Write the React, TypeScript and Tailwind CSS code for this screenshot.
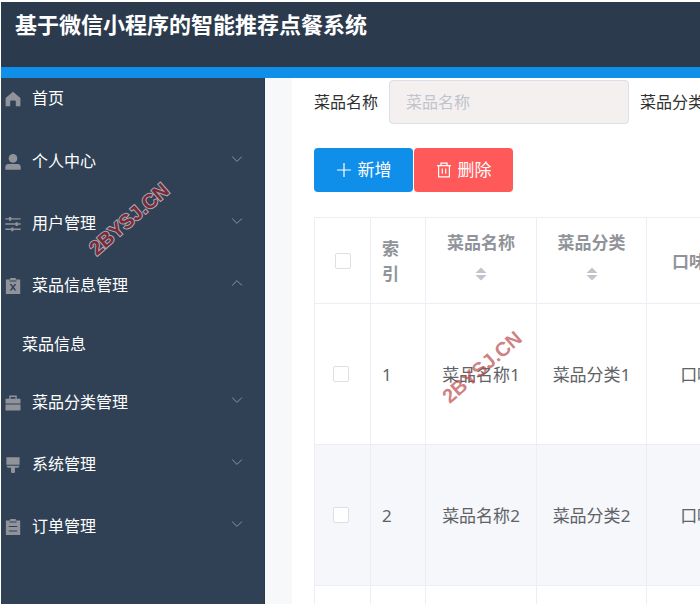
import type { ReactNode } from "react";

const icons: Record<string, ReactNode> = {
  home: <path d="M8 0.8 15.4 7v8.2h-4.6V10.4a1 1 0 0 0-1-1H6.2a1 1 0 0 0-1 1v4.8H0.6V7z" />,
  user: (
    <>
      <circle cx="8" cy="4.4" r="4.3" />
      <path d="M0.3 15.8v-2.4a3.4 3.4 0 0 1 3.4-3.4h8.6a3.4 3.4 0 0 1 3.4 3.4v2.4z" />
    </>
  ),
  operation: (
    <>
      <path d="M0.3 2.2h15.4v1.4H0.3zM0.3 7.3h15.4v1.4H0.3zM0.3 12.6h15.4v1.4H0.3z" />
      <path d="M4 1h2.2v3.8H4zM10.6 6.2h2.2V10h-2.2zM6.2 11.4h2.2v3.8H6.2z" />
    </>
  ),
  release: (
    <path
      fillRule="evenodd"
      d="M5.2 0h5.6v1.4h4.4V16H0.9V1.4h4.3zM4.6 2.4v1.2h6.8V2.4zM4.6 6 7.1 9.3 4.6 12.6h1.8L8 10.4 9.6 12.6h1.8L8.9 9.3 11.4 6H9.6L8 8.2 6.4 6z"
    />
  ),
  briefcase: (
    <path
      fillRule="evenodd"
      d="M4.2 0.6h7.6v3.2h3.7v4.8H0.5V3.8h3.7zM5.6 2v1.8h4.8V2zM0.5 9.6h15v5.8h-15z"
    />
  ),
  brush: <path d="M1.4 0.2h13.2v7.6H1.4zM1.4 8.8h13.2L13.4 10.8H10v4.6l-1.2 0.6H7.2L6 15.4v-4.6H2.6z" />,
  order: (
    <path
      fillRule="evenodd"
      d="M5.2 0h5.6v1.4h4.4V16H0.9V1.4h4.3zM4.6 2.4v1.2h6.8V2.4zM3.8 7v1.1h8.4V7zM3.8 11.4v1.1h8.4v-1.1z"
    />
  ),
};

const menu = [
  { label: "个人中心", icon: "user" },
  { label: "用户管理", icon: "operation" },
  { label: "菜品信息管理", icon: "release", child: "菜品信息" },
  { label: "菜品分类管理", icon: "briefcase" },
  { label: "系统管理", icon: "brush" },
  { label: "订单管理", icon: "order" },
];

function MenuIcon({ name }: { name: string }) {
  return (
    <svg viewBox="0 0 16 16" className="mt-0.5 size-4 shrink-0 fill-[#909399]" aria-hidden="true">
      {icons[name]}
    </svg>
  );
}

function Sidebar() {
  return (
    <nav className="w-[264px] shrink-0 border-r border-[#2a3848] bg-[#304156] text-base leading-5 text-white">
      <a href="#home" className="flex h-13 items-center gap-[11px] pb-3 pl-1">
        <MenuIcon name="home" />
        首页
      </a>
      {menu.map((item) => (
        <div key={item.label}>
          <button
            type="button"
            aria-expanded={Boolean(item.child)}
            className="flex h-[62px] w-full items-center gap-[11px] pr-[21px] pl-1 text-left"
          >
            <MenuIcon name={item.icon} />
            <span className="flex-1">{item.label}</span>
            <svg viewBox="0 0 12 12" className="mb-1 size-3 fill-none stroke-[#909399]" aria-hidden="true">
              <path d={item.child ? "M1.2 8.4 6 3.6l4.8 4.8" : "M1.2 3.6 6 8.4l4.8-4.8"} />
            </svg>
          </button>
          {item.child && (
            <a href="#dishes" className="flex h-[55px] items-center pl-[21px]">
              {item.child}
            </a>
          )}
        </div>
      ))}
    </nav>
  );
}

function SearchField({ id, label }: { id: string; label: string }) {
  return (
    <div className="flex shrink-0 items-center gap-[11px]">
      <label htmlFor={id} className="w-16 whitespace-nowrap text-base text-[#303133]">
        {label}
      </label>
      <input
        id={id}
        placeholder={label}
        className="h-11 w-60 rounded border border-[#dcdfe6] bg-[#f4f0f0] px-4 text-base text-[#606266] outline-none placeholder:text-[#c0c4cc]"
      />
    </div>
  );
}

function Tick({ label }: { label: string }) {
  return (
    <input
      type="checkbox"
      aria-label={label}
      className="block size-4 appearance-none rounded-xs border border-[#dcdfe6] bg-white checked:bg-[#0f8eea]"
    />
  );
}

function SortHeader({ label }: { label: string }) {
  return (
    <th className="border-r border-b border-[#ebeef5] px-[11px] pt-3 pb-[11px] font-bold">
      <div className="flex flex-wrap items-center justify-center">
        <span>{label}</span>
        <button type="button" aria-label={`${label}排序`} className="flex h-[37px] w-[26px] items-center justify-center">
          <svg viewBox="0 0 12 14" className="h-3.5 w-3 fill-[#c0c4cc]" aria-hidden="true">
            <path d="M6 0.5 11.5 6h-11zM6 13.5 0.5 8h11z" />
          </svg>
        </button>
      </div>
    </th>
  );
}

function DishTable() {
  return (
    <table className="mt-[25px] w-[444px] table-fixed border-separate border-spacing-0 border-t border-l border-[#ebeef5] text-[17px] leading-[25px] text-[#606266]">
      <colgroup>
        <col className="w-14" />
        <col className="w-[55px]" />
        <col className="w-[111px]" />
        <col className="w-[110px]" />
        <col className="w-[111px]" />
      </colgroup>
      <thead className="text-[#909399]">
        <tr>
          <th className="border-r border-b border-[#ebeef5] px-5">
            <Tick label="全选" />
          </th>
          <th className="border-r border-b border-[#ebeef5] px-[11px] text-left font-bold">索引</th>
          <SortHeader label="菜品名称" />
          <SortHeader label="菜品分类" />
          <SortHeader label="口味" />
        </tr>
      </thead>
      <tbody>
        {[1, 2, 3].map((n) => (
          <tr key={n} className="h-[141px] even:bg-[#f5f7fa]">
            <td className="border-r border-b border-[#ebeef5] px-[18px]">
              <Tick label={`选择第${n}行`} />
            </td>
            <td className="border-r border-b border-[#ebeef5] px-[11px]">{n}</td>
            <td className="border-r border-b border-[#ebeef5] text-center">菜品名称{n}</td>
            <td className="border-r border-b border-[#ebeef5] text-center">菜品分类{n}</td>
            <td className="border-r border-b border-[#ebeef5] text-center">口味{n}</td>
          </tr>
        ))}
      </tbody>
    </table>
  );
}

export default function App() {
  return (
    <div className="relative flex h-screen flex-col overflow-hidden bg-white pt-0.5 pl-px font-['Noto_Sans','Noto_Sans_CJK_SC',sans-serif]">
      <header className="h-[76px] shrink-0 border-b-[11px] border-[#0f8eea] bg-[#2b3b4d] px-3.5 pt-1.5">
        <h1 className="text-[22px] leading-8 font-bold whitespace-nowrap text-white">基于微信小程序的智能推荐点餐系统</h1>
      </header>
      <div className="flex min-h-0 flex-1">
        <Sidebar />
        <main className="min-w-0 flex-1 overflow-hidden bg-[#f6f8fa] pl-[27px]">
          <div className="min-h-full bg-white pt-0.5 pl-[22px]">
            <form className="flex gap-[11px]">
              <SearchField id="dish-name" label="菜品名称" />
              <SearchField id="dish-type" label="菜品分类" />
            </form>
            <div className="mt-6 flex gap-px text-[17px] text-white">
              <button type="button" className="flex h-11 w-[99px] items-center justify-center gap-1.5 rounded bg-[#0f8eea]">
                <svg viewBox="0 0 16 16" className="size-4 fill-none stroke-current stroke-[1.2]" aria-hidden="true">
                  <path d="M8 1v14M1 8h14" />
                </svg>
                新增
              </button>
              <button type="button" className="flex h-11 w-[99px] items-center justify-center gap-1.5 rounded bg-[#ff5959]">
                <svg viewBox="0 0 16 16" className="size-4 fill-none stroke-current stroke-[1.2]" aria-hidden="true">
                  <path d="M1 3.6h14M5 3.4V1.2h6v2.2M2.6 3.8v11h10.8v-11M6.3 6.4v5.4M9.7 6.4v5.4" />
                </svg>
                删除
              </button>
            </div>
            <DishTable />
          </div>
        </main>
      </div>
      <div
        aria-hidden="true"
        className="pointer-events-none absolute top-[219px] left-[129px] -translate-x-1/2 -translate-y-1/2 -rotate-[41deg] font-['Liberation_Sans',sans-serif] text-xl font-bold text-[#7d2a38] [paint-order:stroke_fill] [-webkit-text-stroke:2px_#a9abb5]"
      >
        2BYSJ.CN
      </div>
      <div
        aria-hidden="true"
        className="pointer-events-none absolute top-[367px] left-[482px] -translate-x-1/2 -translate-y-1/2 -rotate-[41deg] font-['Liberation_Sans',sans-serif] text-xl font-bold text-[#b94a4a]/70"
      >
        2BYSJ.CN
      </div>
    </div>
  );
}
